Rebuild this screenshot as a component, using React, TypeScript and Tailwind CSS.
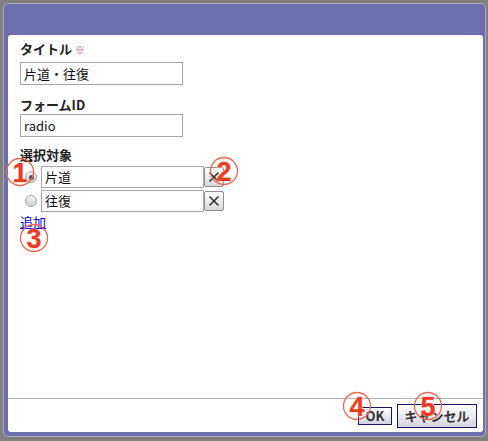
import React from "react";

function Mark({ n, x, y }: { n: string; x: number; y: number }) {
  return (
    <svg
      width="32"
      height="32"
      viewBox="0 0 32 32"
      className="absolute pointer-events-none"
      style={{ left: x - 16, top: y - 16 }}
    >
      <circle cx="16" cy="16" r="13.5" fill="none" stroke="#f0664e" strokeWidth="1.3" />
      <text
        x="16"
        y="25.5"
        textAnchor="middle"
        fontFamily="'Liberation Sans', Arial, sans-serif"
        fontWeight="bold"
        fontSize="27"
        fill="#ee3a22"
        stroke="#ffd0c4"
        strokeWidth="1"
        style={{ paintOrder: "stroke" }}
      >
        {n}
      </text>
    </svg>
  );
}

function XButton() {
  return (
    <button className="w-[20px] h-[20px] border border-[#8f8f8f] rounded-[2px] bg-gradient-to-b from-white to-[#d8d8d8] flex items-center justify-center p-0">
      <svg width="12" height="12" viewBox="0 0 12 12">
        <path d="M1.5 1.5 L10.5 10.5 M10.5 1.5 L1.5 10.5" stroke="#333" strokeWidth="1.6" />
      </svg>
    </button>
  );
}

function Radio({ checked }: { checked?: boolean }) {
  return (
    <span className="w-[12px] h-[12px] rounded-full border border-[#a8a8a8] bg-gradient-to-b from-[#f4f4f4] to-[#cfcfcf] flex items-center justify-center">
      {checked && <span className="w-[5px] h-[5px] rounded-full bg-[#555]" />}
    </span>
  );
}

export default function App() {
  const font = "font-['Noto_Sans_CJK_JP','Noto_Sans',sans-serif]";
  return (
    <div className={`relative w-[488px] h-[441px] bg-[#808080] overflow-hidden pt-[3px] pl-[3px] ${font}`}>
      <div className="w-[483px] h-[434px] rounded-[5px] border border-[#a9a9b4] bg-[#6d6fb0] flex flex-col pl-[4px] pr-[2px] pb-[4px]">
        <div className="h-[31px] shrink-0" />
        <div className="flex-1 bg-white rounded-[3px] flex flex-col">
          <div className="flex-1 pl-[12px] pt-[5px] text-[13px] leading-[18px] text-[#222]">
            <div className="font-bold">
              タイトル<span className="text-[#d0307a] text-[10px] ml-[3px] font-normal">※</span>
            </div>
            <div className="mt-[3px] w-[163px] h-[23px] border border-[#a6a6a6] pl-[3px] flex items-center text-[#111]">
              片道・往復
            </div>
            <div className="font-bold mt-[11px]">フォームID</div>
            <div className="w-[163px] h-[23px] border border-[#a6a6a6] pl-[3px] flex items-center text-[#111]">
              radio
            </div>
            <div className="font-bold mt-[9px]">選択対象</div>
            <div className="mt-[2px] flex flex-col gap-[2px]">
              <div className="flex items-center">
                <div className="ml-[5px] mr-[4px]">
                  <Radio checked />
                </div>
                <div className="w-[163px] h-[22px] border border-[#a6a6a6] pl-[3px] flex items-center text-[#111]">
                  片道
                </div>
                <XButton />
              </div>
              <div className="flex items-center">
                <div className="ml-[5px] mr-[4px]">
                  <Radio />
                </div>
                <div className="w-[163px] h-[22px] border border-[#a6a6a6] pl-[3px] flex items-center text-[#111]">
                  往復
                </div>
                <XButton />
              </div>
            </div>
            <a className="block mt-[1px] text-[#0000ee] underline w-fit">追加</a>
          </div>
          <div className="h-[1px] bg-[#b4b4b4]" />
          <div className="h-[33px] flex items-center justify-end gap-[5px] pr-[6px] text-[13px] font-bold text-[#333]">
            <button className="w-[34px] h-[18px] border border-[#15156a] bg-gradient-to-b from-white to-[#d4d4e2] flex items-center justify-center leading-none">
              OK
            </button>
            <button className="w-[80px] h-[24px] border border-[#15156a] bg-gradient-to-b from-white to-[#d4d4e2] flex items-center justify-center leading-none">
              キャンセル
            </button>
          </div>
        </div>
      </div>
      <Mark n="1" x={20} y={172} />
      <Mark n="2" x={224} y={171} />
      <Mark n="3" x={34} y={238} />
      <Mark n="4" x={357} y={406} />
      <Mark n="5" x={428} y={406} />
    </div>
  );
}
